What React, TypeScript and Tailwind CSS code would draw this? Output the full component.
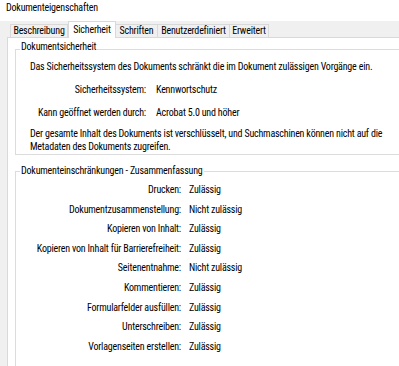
import React from "react";

const tabs: { label: string; w: string; active?: boolean }[] = [
  { label: "Beschreibung", w: "w-[58px] border-l" },
  { label: "Sicherheit", w: "w-[48px]", active: true },
  { label: "Schriften", w: "w-[42px]" },
  { label: "Benutzerdefiniert", w: "w-[72px]" },
  { label: "Erweitert", w: "w-[39px]" },
];

const rows: [string, string][] = [
  ["Drucken:", "Zulässig"],
  ["Dokumentzusammenstellung:", "Nicht zulässig"],
  ["Kopieren von Inhalt:", "Zulässig"],
  ["Kopieren von Inhalt für Barrierefreiheit:", "Zulässig"],
  ["Seitenentnahme:", "Nicht zulässig"],
  ["Kommentieren:", "Zulässig"],
  ["Formularfelder ausfüllen:", "Zulässig"],
  ["Unterschreiben:", "Zulässig"],
  ["Vorlagenseiten erstellen:", "Zulässig"],
];

export default function App() {
  return (
    <div className="w-[399px] h-[366px] overflow-hidden bg-[#f0f0f0] text-[10px] tracking-[-0.2px] text-black font-['Roboto_Condensed','Roboto',sans-serif]">
      <div className="h-[21px] bg-white pl-[6px] pt-[1px] leading-[14px] whitespace-nowrap">Dokumenteigenschaften</div>
      <div className="flex items-end h-[16px] pl-[10px]">
        {tabs.map((t) =>
          t.active ? (
            <div
              key={t.label}
              className={`relative z-10 ${t.w} h-[17px] -mb-[1px] bg-white border-x border-t border-[#d9d9d9] pt-[1px] leading-[14px] text-center whitespace-nowrap`}
            >
              {t.label}
            </div>
          ) : (
            <div
              key={t.label}
              className={`${t.w} h-[13px] bg-[#f0f0f0] border-r border-t border-[#d9d9d9] leading-[12px] text-center whitespace-nowrap`}
            >
              {t.label}
            </div>
          )
        )}
      </div>
      <div className="ml-[7px] w-[460px] h-[400px] bg-white border-l border-t border-[#d9d9d9]">
        {/* Gruppe 1 */}
        <div className="ml-[7px] mt-[2px] w-[440px]">
          <div className="flex items-start">
            <div className="w-[5px] h-[10px] mt-[9px] border-l border-t border-[#dcdcdc]" />
            <span className="px-[1px] leading-[14px] whitespace-nowrap">Dokumentsicherheit</span>
            <div className="flex-1 h-[10px] mt-[9px] border-r border-t border-[#dcdcdc]" />
          </div>
          <div className="border-x border-b border-[#dcdcdc] pl-[14px] pb-[1px] whitespace-nowrap">
            <div className="pt-[1px] leading-[14px]">
              Das Sicherheitssystem des Dokuments schränkt die im Dokument zulässigen Vorgänge ein.
            </div>
            <div className="grid grid-cols-[116px_1fr] gap-x-[10px] mt-[9px] leading-[14px]">
              <div className="text-right">Sicherheitssystem:</div>
              <div>Kennwortschutz</div>
            </div>
            <div className="grid grid-cols-[116px_1fr] gap-x-[10px] mt-[9px] leading-[14px]">
              <div className="text-right">Kann geöffnet werden durch:</div>
              <div>Acrobat 5.0 und höher</div>
            </div>
            <div className="mt-[7px] leading-[13px]">
              Der gesamte Inhalt des Dokuments ist verschlüsselt, und Suchmaschinen können nicht auf die
              <br />
              Metadaten des Dokuments zugreifen.
            </div>
          </div>
        </div>
        {/* Gruppe 2 */}
        <div className="ml-[7px] mt-[9px] w-[440px]">
          <div className="flex items-start">
            <div className="w-[5px] h-[7px] mt-[7px] border-l border-t border-[#dcdcdc]" />
            <span className="px-[1px] leading-[14px] whitespace-nowrap">Dokumenteinschränkungen - Zusammenfassung</span>
            <div className="flex-1 h-[7px] mt-[7px] border-r border-t border-[#dcdcdc]" />
          </div>
          <div className="border-x border-b border-[#dcdcdc] h-[260px] pt-[2px] flex flex-col whitespace-nowrap">
            {rows.map(([l, v]) => (
              <div key={l} className="grid grid-cols-[165px_1fr] gap-x-[8px] h-[19.6px] leading-[19.6px]">
                <div className="text-right">{l}</div>
                <div>{v}</div>
              </div>
            ))}
          </div>
        </div>
      </div>
    </div>
  );
}
